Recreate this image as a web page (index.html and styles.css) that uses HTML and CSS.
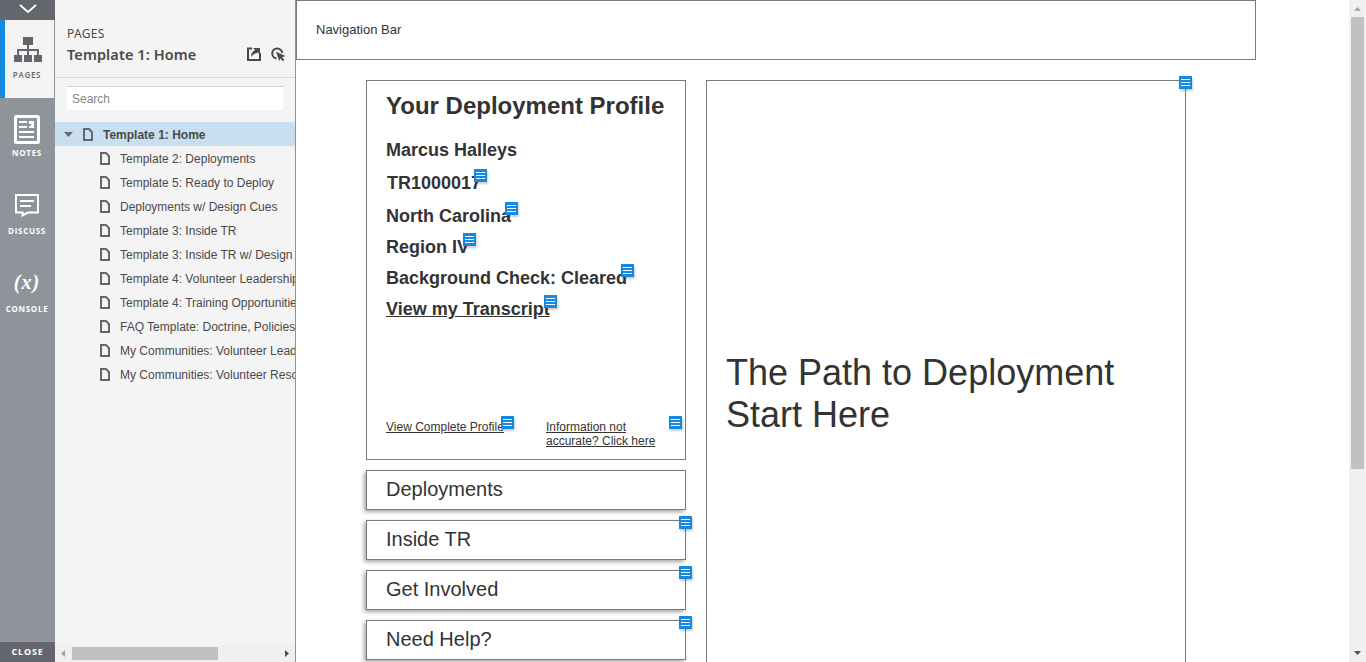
FILE: index.html
```html
<!DOCTYPE html>
<html lang="en">
<head>
<meta charset="utf-8">
<title>Template 1: Home</title>
<link rel="stylesheet" href="styles.css">
</head>
<body>
<svg class="defs" width="0" height="0">
  <symbol id="page" viewBox="0 0 10 13"><path d="M1 1H6L9 4.2V12H1Z" fill="none" stroke="#63676d" stroke-width="2"/></symbol>
  <symbol id="note" viewBox="0 0 13 13"><path d="M0 0H13V13H0Z" fill="#138adf"/><path d="M2 3.5H11M2 6.5H11M2 9.5H11" stroke="#fff"/></symbol>
</svg>
<div class="app">
  <nav class="rail">
    <div class="rail-top"><svg width="20" height="10" viewBox="0 0 20 10"><path d="M2 1L10 8L18 1" fill="none" stroke="#fff" stroke-width="1.8"/></svg></div>
    <div class="rail-item active">
      <svg width="28" height="25" viewBox="0 0 28 25"><path d="M9 0H19V8H9ZM0 18H8V25H0ZM10 18H18V25H10ZM20 18H28V25H20Z" fill="#63676d"/><path d="M14 8V18M4 18V13H24V18" fill="none" stroke="#63676d" stroke-width="2"/></svg>
      <span>PAGES</span>
    </div>
    <div class="rail-item">
      <svg width="26" height="29" viewBox="0 0 26 29"><rect x="1.5" y="1.5" width="23" height="26" rx="1" fill="none" stroke="#fff" stroke-width="3"/><path d="M5 7H13M5 12H13M5 17H20M5 22H20" stroke="#fff" stroke-width="2"/><path d="M15 6H20V13H15Z" fill="#fff"/><path d="M15 9H17V11H15Z" fill="#8f949a"/></svg>
      <span>NOTES</span>
    </div>
    <div class="rail-item">
      <svg width="24" height="23" viewBox="0 0 24 23"><path d="M1 1H23V18.5H13L7.5 21.5V18.5H1Z" fill="none" stroke="#fff" stroke-width="2"/><path d="M5 7H19M5 12H16" stroke="#fff" stroke-width="2"/></svg>
      <span>DISCUSS</span>
    </div>
    <div class="rail-item console">
      <b class="var">(x)</b>
      <span>CONSOLE</span>
    </div>
    <div class="rail-close">CLOSE</div>
  </nav>

  <aside class="panel">
    <header class="panel-head">
      <div class="panel-label">PAGES</div>
      <div class="panel-row">
        <h1>Template 1: Home</h1>
        <svg width="14" height="14" viewBox="0 0 14 14"><path d="M5 1.5H1V13H13V6" fill="none" stroke="#4a4a4a" stroke-width="2"/><path d="M4 10C4 6 6 4 8 3L6 1H13V8L11 5.5C8 6 6 8 4 10Z" fill="#4a4a4a"/></svg>
        <svg width="15" height="15" viewBox="0 0 15 15"><path d="M5.5 11.4A5 5 0 1 1 11.2 6" fill="none" stroke="#4a4a4a" stroke-width="2"/><path d="M5 4.8L14.5 9L11 10.2L13.4 12.8L11.8 14.3L9.5 11.6L8.3 14Z" fill="#4a4a4a"/></svg>
      </div>
    </header>
    <div class="search">Search</div>
    <ul class="tree">
      <li class="selected"><svg class="arrow" width="10" height="5"><path d="M0 0H9L4.5 5Z" fill="#6a6a6a"/></svg><svg width="10" height="13"><use href="#page"/></svg>Template 1: Home</li>
      <li><svg width="10" height="13"><use href="#page"/></svg>Template 2: Deployments</li>
      <li><svg width="10" height="13"><use href="#page"/></svg>Template 5: Ready to Deploy</li>
      <li><svg width="10" height="13"><use href="#page"/></svg>Deployments w/ Design Cues</li>
      <li><svg width="10" height="13"><use href="#page"/></svg>Template 3: Inside TR</li>
      <li><svg width="10" height="13"><use href="#page"/></svg>Template 3: Inside TR w/ Design</li>
      <li><svg width="10" height="13"><use href="#page"/></svg>Template 4: Volunteer Leadership</li>
      <li><svg width="10" height="13"><use href="#page"/></svg>Template 4: Training Opportunities</li>
      <li><svg width="10" height="13"><use href="#page"/></svg>FAQ Template: Doctrine, Policies</li>
      <li><svg width="10" height="13"><use href="#page"/></svg>My Communities: Volunteer Leadership</li>
      <li><svg width="10" height="13"><use href="#page"/></svg>My Communities: Volunteer Resources</li>
    </ul>
    <div class="hscroll">
      <svg width="4" height="7"><path d="M4 0V7L0 3.5Z" fill="#a3a3a3"/></svg>
      <div class="hthumb"></div>
      <svg width="4" height="7"><path d="M0 0V7L4 3.5Z" fill="#505050"/></svg>
    </div>
  </aside>

  <main class="canvas">
    <div class="navbar">Navigation Bar</div>
    <div class="columns">
      <div class="left">
        <section class="profile">
          <h2>Your Deployment Profile</h2>
          <div class="field name">Marcus Halleys</div>
          <div class="field member">TR1000017<svg class="note"><use href="#note"/></svg></div>
          <div class="field state">North Carolina<svg class="note"><use href="#note"/></svg></div>
          <div class="field region">Region IV<svg class="note"><use href="#note"/></svg></div>
          <div class="field check">Background Check: Cleared<svg class="note"><use href="#note"/></svg></div>
          <div class="field transcript"><u>View my Transcript</u><svg class="note"><use href="#note"/></svg></div>
          <div class="links">
            <div class="link complete"><u>View Complete Profile</u><svg class="note"><use href="#note"/></svg></div>
            <div class="link info"><u>Information not<br>accurate? Click here</u><svg class="note"><use href="#note"/></svg></div>
          </div>
        </section>
        <div class="button">Deployments</div>
        <div class="button">Inside TR<svg class="note"><use href="#note"/></svg></div>
        <div class="button">Get Involved<svg class="note"><use href="#note"/></svg></div>
        <div class="button">Need Help?<svg class="note"><use href="#note"/></svg></div>
      </div>
      <section class="path">The Path to Deployment<br>Start Here<svg class="note"><use href="#note"/></svg></section>
    </div>
  </main>

  <div class="vscroll">
    <svg width="7" height="4"><path d="M0 4H7L3.5 0Z" fill="#a3a3a3"/></svg>
    <div class="vthumb"></div>
    <svg width="7" height="4"><path d="M0 0H7L3.5 4Z" fill="#505050"/></svg>
  </div>
</div>
</body>
</html>
```
FILE: styles.css
```css
* { box-sizing: border-box; }
body { margin: 0; font-family: "Liberation Sans", Arial, sans-serif; color: #333; background: #fff; overflow: hidden; }
svg { display: block; flex: none; }
.defs { position: absolute; }
.app { display: flex; width: 1366px; height: 662px; overflow: hidden; }

.rail { width: 55px; flex: none; display: flex; flex-direction: column; background: #8f949a; font-family: "Open Sans", sans-serif; }
.rail-top { height: 20px; background: #63676d; display: flex; justify-content: center; padding-top: 4px; }
.rail-item { height: 78px; display: flex; flex-direction: column; align-items: center; justify-content: flex-end; padding: 0 1px 18px 0; color: #fff; font-size: 8px; font-weight: 700; letter-spacing: 0.7px; line-height: 10px; }
.rail-item span { margin-top: 4px; height: 10px; }
.rail-item.active { background: #f4f4f4; border-left: 5px solid #138adf; border-right: 1px solid #8f949a; padding: 0 4px 18px 0; color: #63676d; font-weight: 600; }
.rail-item.active span { margin-top: 8px; margin-right: 1px; }
.rail-item:nth-child(4) span { margin-top: 9px; }
.rail-item.console span { margin-top: 10px; }
.var { font: italic bold 20px/24px "Liberation Serif", serif; letter-spacing: 1px; }
.rail-close { margin-top: auto; height: 20px; background: #63676d; color: #fff; font-size: 9px; font-weight: 700; letter-spacing: 0.8px; line-height: 20px; text-align: center; }

.panel { width: 241px; flex: none; background: #f4f4f4; border-right: 1px solid #8f949a; display: flex; flex-direction: column; overflow: hidden; }
.panel-head { height: 78px; flex: none; border-bottom: 1px solid #d8d8d8; padding: 26px 9px 0 12px; color: #4a4a4a; font-family: "Noto Sans", sans-serif; }
.panel-label { font-size: 12px; line-height: 16px; letter-spacing: 0.3px; }
.panel-row { display: flex; align-items: center; height: 24px; gap: 10px; }
.panel-row h1 { margin: 0 auto 0 0; padding-top: 1px; font-size: 14.5px; font-weight: 600; line-height: 23px; letter-spacing: 0.1px; white-space: nowrap; }
.search { margin: 8px 11px 11px; height: 25px; flex: none; border: 1px solid #f4f4f4; border-top-color: #d4d4d4; background: #fff; color: #888; font-size: 12px; line-height: 24px; padding-left: 5px; }
.tree { list-style: none; margin: 0; padding: 0; font-size: 12px; line-height: 22px; color: #4a4a4a; flex: 1; }
.tree li { height: 24px; display: flex; align-items: center; gap: 10px; padding: 2px 0 0 45px; white-space: nowrap; }
.tree svg { margin-top: -2px; }
.tree .arrow { margin-right: -1px; }
.tree .selected { background: #c8dfef; padding-left: 9px; font-weight: 700; }
.hscroll { height: 17px; flex: none; background: #f0f0f0; display: flex; align-items: center; padding: 0 6px; }
.hthumb { height: 13px; width: 146px; margin: 0 auto 0 7px; background: #c1c1c1; }

.canvas { flex: 1; min-width: 0; overflow: hidden; }
.navbar { width: 960px; height: 60px; border: 1px solid #797979; padding: 21px 19px; font-size: 13px; line-height: 15px; }
.columns { display: flex; gap: 20px; padding: 20px 0 0 70px; }
.left { width: 320px; display: flex; flex-direction: column; gap: 10px; }
.profile { height: 380px; border: 1px solid #797979; padding: 11px 0 0 19px; }
.profile h2 { margin: 0 0 20px; font-size: 24px; line-height: 28px; white-space: nowrap; }
.field { position: relative; font-size: 18px; font-weight: 700; line-height: 21px; margin-bottom: 10px; white-space: nowrap; }
.name, .member { margin-bottom: 12px; }
.member { margin-left: 1px; width: 93px; }
.state { width: 125px; }
.region { width: 83px; }
.check { width: 241px; }
.transcript { width: 164px; margin-bottom: 100px; }
.links { display: flex; gap: 38px; }
.link { position: relative; font-size: 12px; line-height: 14px; white-space: nowrap; }
.complete { width: 122px; }
.info { width: 130px; }
.note { position: absolute; top: -4px; right: -7px; width: 13px; height: 13px; filter: drop-shadow(1px 2px 1px rgba(0, 0, 0, 0.2)); }
.link .note { right: -6px; }
.button { position: relative; height: 40px; border: 1px solid #797979; background: #fff; box-shadow: -2px 2px 4px rgba(0, 0, 0, 0.35); padding: 7px 19px; font-size: 20px; line-height: 23px; }
.button .note, .path .note { top: -5px; right: -7px; }
.path { position: relative; width: 480px; height: 628px; border: 1px solid #797979; padding: 271px 19px 0; font-size: 36px; line-height: 42px; white-space: nowrap; }

.vscroll { width: 17px; flex: none; background: #f0f0f0; display: flex; flex-direction: column; align-items: center; padding: 7px 0; }
.vthumb { width: 13px; height: 452px; margin: 6px 0 auto; background: #c1c1c1; }
```
